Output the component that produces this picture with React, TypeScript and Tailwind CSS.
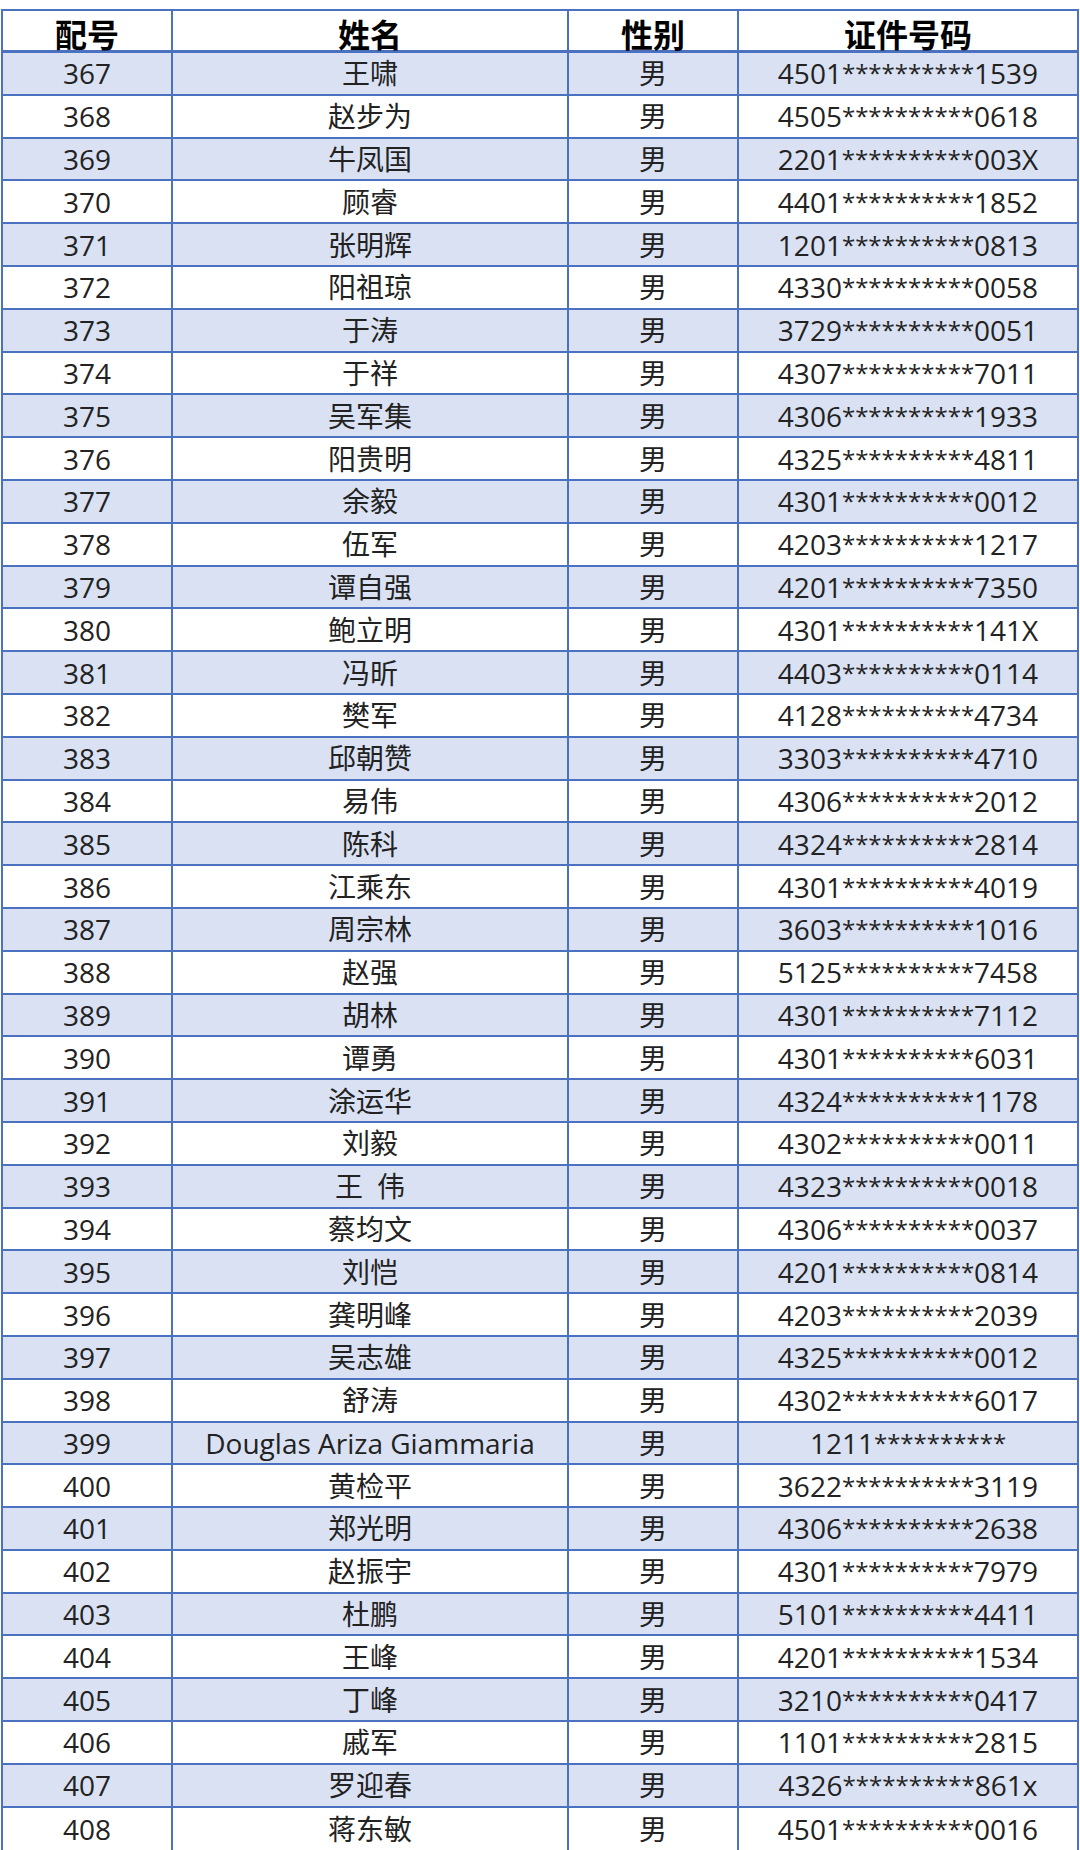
const rows: [string, string, string][] = [
  ['367', '王啸', '4501**********1539'],
  ['368', '赵步为', '4505**********0618'],
  ['369', '牛凤国', '2201**********003X'],
  ['370', '顾睿', '4401**********1852'],
  ['371', '张明辉', '1201**********0813'],
  ['372', '阳祖琼', '4330**********0058'],
  ['373', '于涛', '3729**********0051'],
  ['374', '于祥', '4307**********7011'],
  ['375', '吴军集', '4306**********1933'],
  ['376', '阳贵明', '4325**********4811'],
  ['377', '余毅', '4301**********0012'],
  ['378', '伍军', '4203**********1217'],
  ['379', '谭自强', '4201**********7350'],
  ['380', '鲍立明', '4301**********141X'],
  ['381', '冯昕', '4403**********0114'],
  ['382', '樊军', '4128**********4734'],
  ['383', '邱朝赞', '3303**********4710'],
  ['384', '易伟', '4306**********2012'],
  ['385', '陈科', '4324**********2814'],
  ['386', '江乘东', '4301**********4019'],
  ['387', '周宗林', '3603**********1016'],
  ['388', '赵强', '5125**********7458'],
  ['389', '胡林', '4301**********7112'],
  ['390', '谭勇', '4301**********6031'],
  ['391', '涂运华', '4324**********1178'],
  ['392', '刘毅', '4302**********0011'],
  ['393', '王\u2002伟', '4323**********0018'],
  ['394', '蔡均文', '4306**********0037'],
  ['395', '刘恺', '4201**********0814'],
  ['396', '龚明峰', '4203**********2039'],
  ['397', '吴志雄', '4325**********0012'],
  ['398', '舒涛', '4302**********6017'],
  ['399', 'Douglas Ariza Giammaria', '1211**********'],
  ['400', '黄检平', '3622**********3119'],
  ['401', '郑光明', '4306**********2638'],
  ['402', '赵振宇', '4301**********7979'],
  ['403', '杜鹏', '5101**********4411'],
  ['404', '王峰', '4201**********1534'],
  ['405', '丁峰', '3210**********0417'],
  ['406', '戚军', '1101**********2815'],
  ['407', '罗迎春', '4326**********861x'],
  ['408', '蒋东敏', '4501**********0016'],
];

function IdCell({ id }: { id: string }) {
  // stars are drawn smaller than the digits in the source sheet
  const m = id.match(/^(\d+)(\*+)(.*)$/);
  if (!m) return <>{id}</>;
  return (
    <>
      {m[1]}
      <span className="text-[24px]">{m[2]}</span>
      {m[3]}
    </>
  );
}

const grid = 'grid grid-cols-[170px_396px_170px_1fr]';
const cell = 'flex items-center justify-center border-r-2 border-[#4a72c0]';

export default function App() {
  return (
    <div className="min-h-[1850px] bg-white pt-[9px] pl-px font-['Open_Sans','Noto_Sans_CJK_SC',sans-serif] text-[#222]">
      <div className="w-[1078px] border-2 border-[#4a72c0]">
        <div className={`${grid} h-[42px] border-b-[3px] border-[#4a72c0] text-[32px] font-bold text-black`}>
          <div className={cell}>配号</div>
          <div className={cell}>姓名</div>
          <div className={cell}>性别</div>
          <div className="flex items-center justify-center">证件号码</div>
        </div>
        {rows.map(([no, name, id], i) => (
          <div
            key={no}
            className={`${grid} h-[42.8px] text-[28px] leading-none ${
              i < rows.length - 1 ? 'border-b-2 border-[#4a72c0]' : ''
            } ${i % 2 === 0 ? 'bg-[#d9e1f2]' : 'bg-white'}`}
          >
            <div className={cell}>{no}</div>
            <div className={`${cell} whitespace-pre`}>{name}</div>
            <div className={cell}>男</div>
            <div className="flex items-center justify-center">
              <IdCell id={id} />
            </div>
          </div>
        ))}
      </div>
    </div>
  );
}
